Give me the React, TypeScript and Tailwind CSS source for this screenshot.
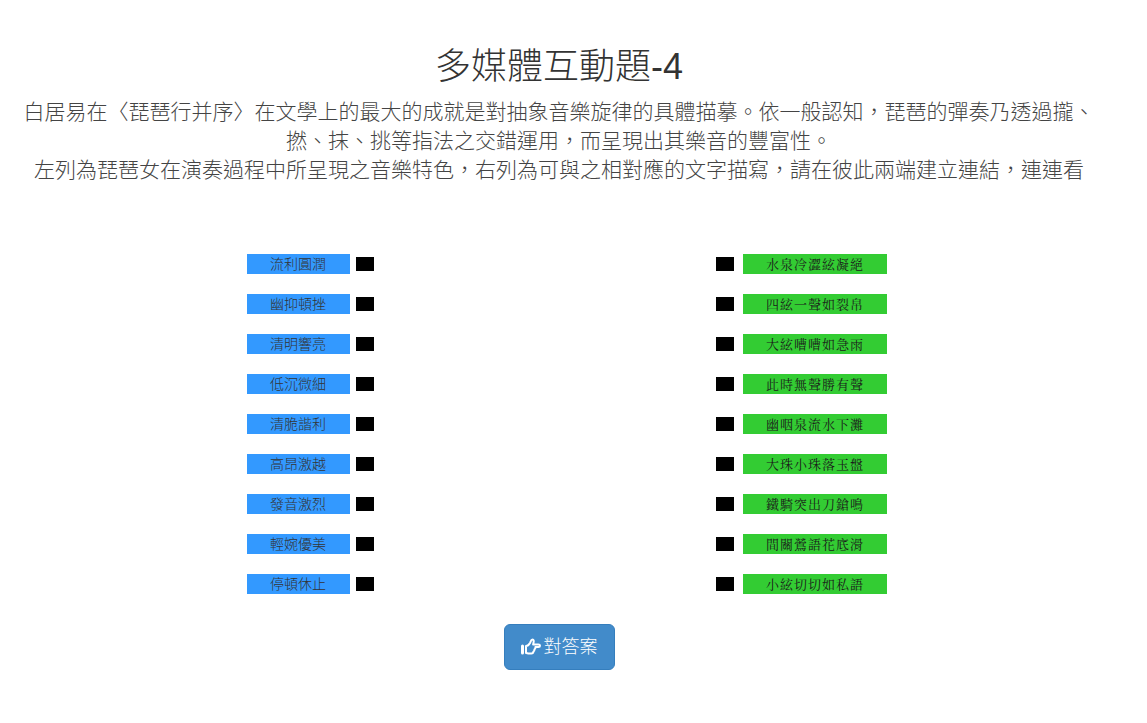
const leftItems = ['流利圓潤', '幽抑頓挫', '清明響亮', '低沉微細', '清脆諧利', '高昂激越', '發音激烈', '輕婉優美', '停頓休止'];
const rightItems = ['水泉冷澀絃凝絕', '四絃一聲如裂帛', '大絃嘈嘈如急雨', '此時無聲勝有聲', '幽咽泉流水下灘', '大珠小珠落玉盤', '鐵騎突出刀鎗鳴', '間關鶯語花底滑', '小絃切切如私語'];

const HandRight = () => (
  <svg width="20" height="18" viewBox="0 0 20 18" fill="none" stroke="currentColor" strokeWidth="2" strokeLinejoin="round" strokeLinecap="round">
    <path d="M1.5 8v7" strokeWidth="3" />
    <path d="M5 8c2 0 3-1.2 4-3 .7-1.4 1-3.5 2.5-3.5 1.3 0 1.5 1.6 1 3.3l-.4 1.7h5.3c1 0 1.6.5 1.6 1.2s-.6 1.3-1.6 1.3h-3c.2 1.2-.1 2-1 2.4.2 1.1-.2 1.9-1 2.3-.1 1-1 1.8-2 1.8H8c-1.2 0-2-.6-3-.6z" />
  </svg>
);

const App = () => {
  return (
    <div className="w-[1118px] h-[723px] bg-white text-[#333333] font-['Liberation_Sans','Noto_Sans_CJK_TC',sans-serif]">
      <h2 className="pt-[47px] text-center text-[36px] leading-[40px] font-light">多媒體互動題-4</h2>
      <div className="mt-[10px] text-center text-[21px] leading-[29px] font-light text-[#444444]">
        <p className="px-5">白居易在〈琵琶行并序〉在文學上的最大的成就是對抽象音樂旋律的具體描摹。依一般認知&#xFF0C;琵琶的彈奏乃透過攏、撚、抹、挑等指法之交錯運用&#xFF0C;而呈現出其樂音的豐富性。</p>
        <p>左列為琵琶女在演奏過程中所呈現之音樂特色&#xFF0C;右列為可與之相對應的文字描寫&#xFF0C;請在彼此兩端建立連結&#xFF0C;連連看</p>
      </div>
      <div className="mt-[70px] flex">
        <div className="ml-[247px] flex w-[127px] flex-col gap-5">
          {leftItems.map((item) => (
            <div key={item} className="flex h-5 items-center">
              <div className="h-5 w-[103px] bg-[#3399ff] pr-px text-center text-sm leading-5 font-light">{item}</div>
              <div className="ml-[6px] h-[14px] w-[18px] bg-black" />
            </div>
          ))}
        </div>
        <div className="ml-[342px] flex w-[171px] flex-col gap-5">
          {rightItems.map((item) => (
            <div key={item} className="flex h-5 items-center">
              <div className="h-[14px] w-[18px] bg-black" />
              <div className="ml-[9px] h-5 w-[144px] bg-[#33cc33] text-center font-['Noto_Serif_CJK_TC','Noto_Sans_CJK_TC',serif] text-[13px] leading-5 tracking-[1px] text-[#1a1a1a]">{item}</div>
            </div>
          ))}
        </div>
      </div>
      <div className="mt-[30px] flex justify-center">
        <button className="flex h-[46px] w-[111px] items-center justify-center gap-[3px] rounded-md border border-[#357ebd] bg-[#428bca] text-lg font-light text-white">
          <HandRight />
          對答案
        </button>
      </div>
    </div>
  );
};

export default App;
